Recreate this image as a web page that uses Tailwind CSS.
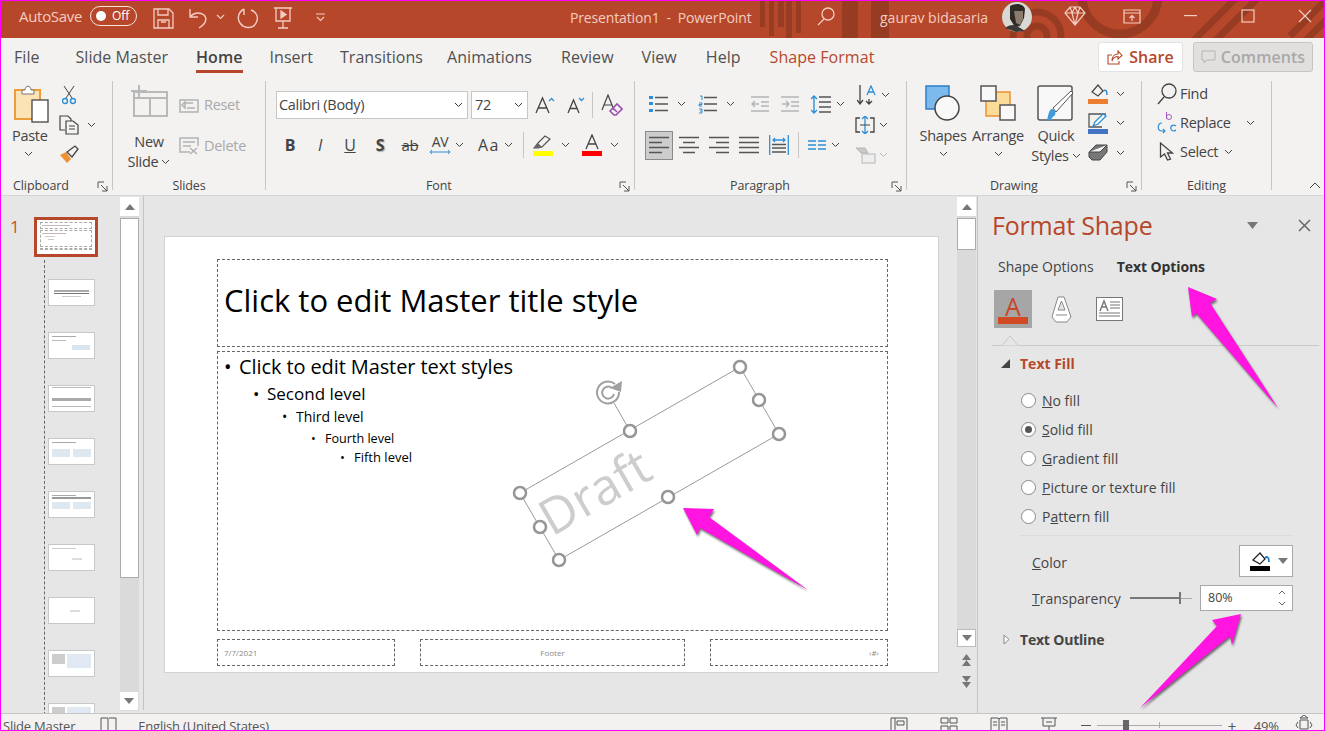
<!DOCTYPE html>
<html><head><meta charset="utf-8">
<script src="https://cdn.jsdelivr.net/npm/@tailwindcss/browser@4"></script>
</head>
<body class="bg-[#e6e6e6]">
<div class="relative w-[1325px] h-[731px] overflow-hidden flex flex-col font-['Open_Sans',sans-serif] text-[#444] bg-[#e6e6e6]">

<!-- Title bar -->
<div class="relative h-[38px] shrink-0 bg-[#b7472a] text-[#f3cdc2] flex items-center overflow-hidden">
  <svg class="absolute left-0 top-0" width="1325" height="38" fill="#000" opacity="0.16">
    <rect x="760" y="0" width="5" height="27"/><rect x="769" y="0" width="5" height="36"/><rect x="778" y="0" width="6" height="27"/><rect x="786" y="0" width="6" height="38"/><rect x="796" y="0" width="5" height="33"/><rect x="842" y="0" width="16" height="38"/><rect x="871" y="0" width="18" height="38"/>
    <g fill="none" stroke="#000"><circle cx="1037" cy="36" r="10" stroke-width="7"/><circle cx="1037" cy="36" r="24" stroke-width="7"/><circle cx="1120" cy="-4" r="38" stroke-width="9"/><path d="M1190 44l50-50M1212 44l50-50M1290 36l34-34M1300 46l34-34" stroke-width="7"/></g>
  </svg>
  <span class="relative -mt-[6px] ml-[19px] w-[62px] text-[15px] whitespace-nowrap tracking-[-0.3px]">AutoSave</span>
  <span class="relative -mt-[6px] ml-[9px] w-[47px] h-[20px] rounded-full border border-[#f7e3dd] flex items-center text-white text-[12px] pl-[5px] gap-[6px]"><span class="w-[10px] h-[10px] rounded-full bg-white"></span>Off</span>
  <svg class="relative -mt-[2px] ml-[16px]" width="21" height="21" viewBox="0 0 21 21" fill="none" stroke="#f3cdc2" stroke-width="1.3"><path d="M1 1h15l4 4v15H1zM5 1v6h10V1M5 20v-8h11v8M8 14h5"/></svg>
  <svg class="relative -mt-[2px] ml-[14px]" width="20" height="22" viewBox="0 0 20 22" fill="none" stroke="#f3cdc2" stroke-width="1.4"><path d="M2 2v8h8M2 10c4-5 10-5 14-2 3 3 3 8-5 13"/></svg>
  <svg class="relative -mt-[4px] ml-[8px]" width="9" height="6" viewBox="0 0 9 6" fill="none" stroke="#f3cdc2" stroke-width="1.2"><path d="M1 1l3.500 3.500L8 1"/></svg>
  <svg class="relative -mt-[2px] ml-[12px]" width="21" height="21" viewBox="0 0 21 21" fill="none" stroke="#f3cdc2" stroke-width="1.4"><path d="M7 1C1 4 0 11 3 15c4 6 13 6 16 0 3-5 1-11-5-13M7 1v6"/></svg>
  <svg class="relative -mt-[2px] ml-[15px]" width="20" height="22" viewBox="0 0 20 22" fill="none" stroke="#f3cdc2" stroke-width="1.3"><path d="M1 1h18M3 1v13h14V1M10 14v7M5 21h10"/><path d="M8 4l5 3.500-5 3.500z" fill="#f3cdc2"/></svg>
  <svg class="relative -mt-[4px] ml-[22px]" width="11" height="9" viewBox="0 0 11 9" fill="none" stroke="#f3cdc2" stroke-width="1.1"><path d="M1 1h9M2 4l3.500 3.500L9 4"/></svg>
  <span class="relative -mt-[4px] ml-[244px] w-[186px] text-[14px] whitespace-nowrap tracking-[-0.15px]">Presentation1&nbsp; -&nbsp; PowerPoint</span>
  <svg class="relative -mt-[6px] ml-[60px]" width="20" height="20" viewBox="0 0 20 20" fill="none" stroke="#f3cdc2" stroke-width="1.3"><circle cx="12" cy="8" r="6"/><path d="M8 13l-6 6"/></svg>
  <span class="relative -mt-[4px] ml-[44px] w-[110px] text-[14px] whitespace-nowrap">gaurav bidasaria</span>
  <svg class="relative ml-[12px] -mt-[5px]" width="30" height="30" viewBox="0 0 30 30"><circle cx="15" cy="15" r="15" fill="#d8d8d4"/><path d="M8 4c5-3 13-3 15 3l-1 9-4 8-5 1-5-8z" fill="#2e2a26"/><path d="M12 9l9 0 0 8-3 6-4-2z" fill="#8b7c6e"/><path d="M3 26c4-3 8-4 12-2l8 5-9 1z" fill="#3b3835"/></svg>
  <svg class="relative -mt-[6px] ml-[32px]" width="22" height="20" viewBox="0 0 22 20" fill="none" stroke="#f3cdc2" stroke-width="1.2"><path d="M6 1h10l5 6-10 12L1 7zM1 7h20M8 7l3 12 3-12M6 1l2 6 3-6 3 6 2-6"/></svg>
  <svg class="relative -mt-[6px] ml-[37px]" width="18" height="15" viewBox="0 0 18 15" fill="none" stroke="#f3cdc2" stroke-width="1.2"><path d="M1 1h16v13H1zM1 4h16M9 12V7M6.500 9L9 6.500 11.500 9"/></svg>
  <svg class="relative -mt-[6px] ml-[43px]" width="14" height="2"><rect width="13" height="1.200" fill="#f3cdc2"/></svg>
  <svg class="relative -mt-[6px] ml-[43px]" width="14" height="14" fill="none" stroke="#f3cdc2" stroke-width="1.2"><rect x="1" y="1" width="12" height="12"/></svg>
  <svg class="relative -mt-[6px] ml-[43px]" width="14" height="14" fill="none" stroke="#f3cdc2" stroke-width="1.2"><path d="M1 1l12 12M13 1L1 13"/></svg>
</div>

<!-- Tabs -->
<div class="h-[38px] shrink-0 bg-[#f3f2f1] flex items-start text-[16px] text-[#505050] tracking-[0.05px] whitespace-nowrap">
  <span class="ml-[14px] mt-[7px]">File</span>
  <span class="ml-[36px] mt-[7px]">Slide Master</span>
  <span class="ml-[28px] mt-[7px] relative font-semibold text-[#444]">Home<span class="absolute left-0 right-0 top-[25px] h-[3px] bg-[#b7472a]"></span></span>
  <span class="ml-[27px] mt-[7px]">Insert</span>
  <span class="ml-[27px] mt-[7px]">Transitions</span>
  <span class="ml-[24px] mt-[7px]">Animations</span>
  <span class="ml-[29px] mt-[7px]">Review</span>
  <span class="ml-[28px] mt-[7px]">View</span>
  <span class="ml-[29px] mt-[7px]">Help</span>
  <span class="ml-[29px] mt-[7px] text-[#b7472a]">Shape Format</span>
  <span class="ml-auto mt-[4px] w-[85px] h-[30px] bg-white rounded-[3px] border border-[#e3e2e0] flex items-center justify-center gap-[6px] font-semibold text-[#b7472a]">
    <svg width="16" height="15" viewBox="0 0 16 15" fill="none" stroke="#b7472a" stroke-width="1.100"><path d="M5 5H1v9h11v-3M5 11c0-5 3-7 6-7V1l4 4.500L11 9V6.500c-3 0-5 1.500-6 4.500z"/></svg>Share
  </span>
  <span class="ml-[10px] mr-[12px] mt-[4px] w-[120px] h-[30px] bg-[#e1e0df] rounded-[3px] border border-[#c8c6c4] flex items-center justify-center gap-[5px] font-semibold text-[#a9a8a7]">
    <svg width="15" height="14" viewBox="0 0 15 14" fill="none" stroke="#b4b3b2"><path d="M1 1h13v9H6l-3 3v-3H1z"/></svg>Comments
  </span>
</div>

<!-- Ribbon -->
<div class="h-[120px] shrink-0 bg-[#f3f2f1] border-b border-[#d6d6d6] flex pt-[5px] text-[14.5px] leading-[20px] whitespace-nowrap tracking-[-0.3px]">

  <!-- Clipboard -->
  <div class="w-[113px] h-[109px] border-r border-[#c8c6c4] flex flex-col">
    <div class="h-[96px] shrink-0 flex pl-[14px]">
      <div class="w-[36px] flex flex-col items-start pt-[4px]">
        <svg width="36" height="38" viewBox="0 0 36 38"><rect x="1" y="5" width="25" height="29" fill="#fbe3b5" stroke="#ed9d3a" stroke-width="2"/><path d="M8 5h3c0-5 6-5 6 0h3v4H8z" fill="#fff" stroke="#777"/><rect x="18" y="15" width="16" height="22" fill="#fff" stroke="#444" stroke-width="1.300"/></svg>
        <span class="mt-[3px] -ml-[2px]">Paste</span>
        <svg class="mt-[5px] ml-[10px]" width="9" height="6" viewBox="0 0 9 6" fill="none" stroke="#444"><path d="M1 1l3.500 3.500L8 1"/></svg>
      </div>
      <div class="ml-[9px] pt-[4px] flex flex-col">
        <svg class="ml-[3px]" width="14" height="20" viewBox="0 0 14 20" fill="none" stroke="#444"><path d="M2 1l8 12M12 1L4 13"/><circle cx="3" cy="16" r="2.500" stroke="#2e8fd6" stroke-width="1.400"/><circle cx="11" cy="16" r="2.500" stroke="#2e8fd6" stroke-width="1.400"/></svg>
        <div class="mt-[10px] flex items-center">
          <svg width="20" height="20" viewBox="0 0 20 20" fill="none" stroke="#444" stroke-width="1.200"><path d="M6 15H1V1h8l3 3v2M7 6h7l5 4v9H7zM10 11h6M10 14h6"/></svg>
          <svg class="ml-[8px]" width="9" height="6" viewBox="0 0 9 6" fill="none" stroke="#444"><path d="M1 1l3.500 3.500L8 1"/></svg>
        </div>
        <svg class="mt-[10px]" width="20" height="19" viewBox="0 0 20 19"><path d="M1 10l6-3 5 7-4 4z" fill="#ee9134"/><path d="M8 7l8-6 3 3-6 8z" fill="none" stroke="#444" stroke-width="1.300"/></svg>
      </div>
    </div>
    <div class="h-[18px] shrink-0 flex items-center justify-between pl-[13px] pr-[4px] text-[12.5px] tracking-[-0.1px]"><span>Clipboard</span>
      <svg width="11" height="11" viewBox="0 0 11 11" fill="none" stroke="#555"><path d="M1 7V1h6M4 4l6 6M10 5v5H5"/></svg></div>
  </div>

  <!-- Slides -->
  <div class="w-[153px] h-[109px] border-r border-[#c8c6c4] flex flex-col">
    <div class="h-[96px] shrink-0 flex">
      <div class="ml-[6px] w-[60px] flex flex-col items-center pt-[3px]">
        <svg width="38" height="33" viewBox="0 0 38 33" fill="none" stroke="#b9b9b9" stroke-width="2"><path d="M4 8h33v24H4zM4 14h33M20 14v18M9 1v14M1 7h16"/></svg>
        <span class="mt-[15px]">New</span>
        <span class="flex items-center gap-[3px]">Slide<svg width="9" height="6" viewBox="0 0 9 6" fill="none" stroke="#444"><path d="M1 1l3.500 3.500L8 1"/></svg></span>
      </div>
      <div class="flex flex-col">
        <div class="mt-[16px] h-[16px] flex items-center text-[#aaa]"><svg width="20" height="16" viewBox="0 0 20 16" fill="none" stroke="#b2b2b2" stroke-width="1.500"><path d="M1 3h18v12H1zM5 6h9M8 11h8M3 8l3-3v6z"/></svg><span class="ml-[5px]">Reset</span></div>
        <div class="mt-[24px] h-[18px] flex items-center text-[#aaa]"><svg width="20" height="18" viewBox="0 0 20 18" fill="none" stroke="#b2b2b2" stroke-width="1.500"><path d="M19 9V1H1v14h10M4 5h12M4 9h8M11 11l7 6M18 11l-7 6"/></svg><span class="ml-[5px]">Delete</span></div>
      </div>
    </div>
    <div class="h-[18px] shrink-0 flex items-center justify-center text-[12.5px] tracking-[-0.1px]">Slides</div>
  </div>

  <!-- Font -->
  <div class="w-[369px] h-[109px] border-r border-[#c8c6c4] flex flex-col">
    <div class="h-[96px] shrink-0 flex flex-col">
      <div class="mt-[10px] h-[28px] pl-[10px] flex items-center">
        <div class="w-[192px] h-[28px] bg-white border border-[#c8c6c4] flex items-center justify-between pl-[2px] pr-[4px]"><span>Calibri (Body)</span><svg width="9" height="6" viewBox="0 0 9 6" fill="none" stroke="#333"><path d="M1 1l3.500 3.500L8 1"/></svg></div>
        <div class="ml-[3px] w-[57px] h-[28px] bg-white border border-[#c8c6c4] flex items-center justify-between pl-[3px] pr-[4px]"><span>72</span><svg width="9" height="6" viewBox="0 0 9 6" fill="none" stroke="#333"><path d="M1 1l3.500 3.500L8 1"/></svg></div>
        <svg class="ml-[7px]" width="20" height="20" viewBox="0 0 20 20" fill="none" stroke="#444" stroke-width="1.300"><path d="M1 18L7.500 3 14 18M3.500 13h8"/><path d="M14 6l2.500-2.500L19 6" stroke="#2e8fd6"/></svg>
        <svg class="ml-[12px]" width="18" height="20" viewBox="0 0 18 20" fill="none" stroke="#444" stroke-width="1.300"><path d="M1 18L6.500 5 12 18M3 13.500h7"/><path d="M12 3l2.500 2.500L17 3" stroke="#2e8fd6"/></svg>
        <span class="ml-[7px] w-[1px] h-[26px] bg-[#c8c6c4]"></span>
        <svg class="ml-[8px]" width="22" height="22" viewBox="0 0 22 22" fill="none" stroke="#444" stroke-width="1.200"><path d="M1 16L7 1l6 15M3 11h8"/><path d="M9 17l7-7 5 5-6 6h-2zM12 14l4 4" stroke="#9b4fb0" stroke-width="1.600"/></svg>
      </div>
      <div class="mt-[14px] h-[24px] pl-[9px] flex items-center">
        <span class="w-[30px] text-center font-bold text-[16px]">B</span>
        <span class="w-[30px] text-center italic text-[16px]">I</span>
        <span class="w-[30px] text-center underline text-[16px]">U</span>
        <span class="w-[30px] text-center font-bold text-[16px] [text-shadow:1px_1px_1px_#aaa]">S</span>
        <span class="w-[30px] text-center line-through text-[15px]">ab</span>
        <span class="ml-[3px] w-[24px] flex flex-col items-center text-[14px] leading-[14px]">AV<svg width="22" height="6" viewBox="0 0 22 6" fill="none" stroke="#2e8fd6"><path d="M1 3h20M3 1L1 3l2 2M19 1l2 2-2 2"/></svg></span>
        <svg class="ml-[3px]" width="9" height="6" viewBox="0 0 9 6" fill="none" stroke="#444"><path d="M1 1l3.500 3.500L8 1"/></svg>
        <span class="ml-[14px] w-[24px] text-[16px] tracking-[1.500px]">Aa</span>
        <svg class="ml-[2px]" width="9" height="6" viewBox="0 0 9 6" fill="none" stroke="#444"><path d="M1 1l3.500 3.500L8 1"/></svg>
        <span class="ml-[10px] w-[1px] h-[26px] bg-[#c8c6c4]"></span>
        <svg class="ml-[9px]" width="20" height="22" viewBox="0 0 20 22"><path d="M1 14l4-5 7-7 5 3-8 8-4 1z" fill="none" stroke="#555" stroke-width="1.200"/><path d="M1 14l4-5 4 4-4 1z" fill="#666"/><rect y="17" width="20" height="5" fill="#ffff00"/></svg>
        <svg class="ml-[8px]" width="9" height="6" viewBox="0 0 9 6" fill="none" stroke="#444"><path d="M1 1l3.500 3.500L8 1"/></svg>
        <svg class="ml-[12px]" width="20" height="22" viewBox="0 0 20 22"><path d="M4 15L10 1l6 14M6 10h8" fill="none" stroke="#444" stroke-width="1.300"/><rect y="17" width="20" height="5" fill="#ff0000"/></svg>
        <svg class="ml-[8px]" width="9" height="6" viewBox="0 0 9 6" fill="none" stroke="#444"><path d="M1 1l3.500 3.500L8 1"/></svg>
      </div>
    </div>
    <div class="h-[18px] shrink-0 flex items-center pr-[4px] text-[12.5px] tracking-[-0.1px]"><span class="ml-[160px]">Font</span>
      <svg class="ml-auto" width="11" height="11" viewBox="0 0 11 11" fill="none" stroke="#555"><path d="M1 7V1h6M4 4l6 6M10 5v5H5"/></svg></div>
  </div>

  <!-- Paragraph -->
  <div class="w-[272px] h-[109px] border-r border-[#c8c6c4] flex flex-col">
    <div class="h-[96px] shrink-0 flex">
      <div class="w-[220px] flex flex-col">
        <div class="mt-[13px] h-[20px] pl-[14px] flex items-center">
          <svg width="19" height="18" viewBox="0 0 19 18"><path d="M0 1h4v3H0zM0 7h4v3H0zM0 14h4v3H0z" fill="#2e8fd6"/><path d="M6 2.500h13M6 9h13M6 15.500h13" stroke="#555" stroke-width="1.500"/></svg>
          <svg class="ml-[9px]" width="9" height="6" viewBox="0 0 9 6" fill="none" stroke="#444"><path d="M1 1l3.500 3.500L8 1"/></svg>
          <svg class="ml-[12px]" width="19" height="19" viewBox="0 0 19 19"><path d="M2 1h2v4M1 8h3v1.500H1V11h3M1 14h3v4H1M2 16h2" fill="none" stroke="#2e8fd6"/><path d="M6 2.500h13M6 9h13M6 15.500h13" stroke="#555" stroke-width="1.500"/></svg>
          <svg class="ml-[9px]" width="9" height="6" viewBox="0 0 9 6" fill="none" stroke="#444"><path d="M1 1l3.500 3.500L8 1"/></svg>
          <svg class="ml-[16px]" width="18" height="16" viewBox="0 0 18 16" fill="none" stroke="#b5b5b5" stroke-width="1.500"><path d="M0 1h18M10 6h8M10 10h8M0 15h18M8 8H1M4 5L1 8l3 3"/></svg>
          <svg class="ml-[12px]" width="18" height="16" viewBox="0 0 18 16" fill="none" stroke="#b5b5b5" stroke-width="1.500"><path d="M0 1h18M10 6h8M10 10h8M0 15h18M1 8h7M5 5l3 3-3 3"/></svg>
          <svg class="ml-[12px]" width="20" height="19" viewBox="0 0 20 19" fill="none"><path d="M3 1v17M0 4l3-3 3 3M0 15l3 3 3-3" stroke="#2e8fd6" stroke-width="1.400"/><path d="M8 2h12M8 7h12M8 12h12M8 17h12" stroke="#555" stroke-width="1.500"/></svg>
          <svg class="ml-[5px]" width="9" height="6" viewBox="0 0 9 6" fill="none" stroke="#444"><path d="M1 1l3.500 3.500L8 1"/></svg>
        </div>
        <div class="mt-[17px] h-[28px] pl-[10px] flex items-center">
          <div class="w-[28px] h-[29px] bg-[#cdcdcd] border border-[#8a8a8a] flex items-center justify-center"><svg width="20" height="18" viewBox="0 0 20 18" stroke="#555" stroke-width="1.500"><path d="M0 1.500h20M0 6.500h13M0 11.500h20M0 16.500h13"/></svg></div>
          <svg class="ml-[6px]" width="20" height="18" viewBox="0 0 20 18" stroke="#555" stroke-width="1.500"><path d="M0 1.500h20M4 6.500h12M0 11.500h20M4 16.500h12"/></svg>
          <svg class="ml-[10px]" width="20" height="18" viewBox="0 0 20 18" stroke="#555" stroke-width="1.500"><path d="M0 1.500h20M7 6.500h13M0 11.500h20M7 16.500h13"/></svg>
          <svg class="ml-[10px]" width="20" height="18" viewBox="0 0 20 18" stroke="#555" stroke-width="1.500"><path d="M0 1.500h20M0 6.500h20M0 11.500h20M0 16.500h20"/></svg>
          <svg class="ml-[10px]" width="20" height="20" viewBox="0 0 20 20" fill="none"><path d="M.7 0v20M19.300 0v20M4 5h12M6 3L4 5l2 2M14 3l2 2-2 2" stroke="#2e8fd6" stroke-width="1.300"/><path d="M3 9.500h14M3 13h14M3 17h14" stroke="#555" stroke-width="1.500"/></svg>
          <span class="ml-[9px] w-[1px] h-[26px] bg-[#c8c6c4]"></span>
          <svg class="ml-[9px]" width="18" height="10" viewBox="0 0 18 10" stroke="#2e8fd6" stroke-width="1.500"><path d="M0 1h8M0 5h8M0 9h8M10 1h8M10 5h8M10 9h8"/></svg>
          <svg class="ml-[5px]" width="9" height="6" viewBox="0 0 9 6" fill="none" stroke="#444"><path d="M1 1l3.500 3.500L8 1"/></svg>
        </div>
      </div>
      <div class="flex flex-col pt-[4px]">
        <div class="h-[20px] flex items-center">
          <svg class="ml-[2px]" width="23" height="20" viewBox="0 0 23 20" fill="none"><path d="M3 0v19M0 15l3 4 3-4" stroke="#444" stroke-width="1.300"/><path d="M12 14v5M9 16l3 3 3-3" stroke="#444" stroke-width="1.300"/><path d="M10 10l4-9 4 9M11.500 7h5" stroke="#2e8fd6" stroke-width="1.300"/></svg>
          <svg class="ml-[1px]" width="9" height="6" viewBox="0 0 9 6" fill="none" stroke="#444"><path d="M1 1l3.500 3.500L8 1"/></svg>
        </div>
        <div class="mt-[10px] h-[20px] flex items-center">
          <svg width="20" height="18" viewBox="0 0 20 18" fill="none"><path d="M5 2H1v14h4M15 2h4v14h-4" stroke="#444" stroke-width="1.300"/><path d="M10 0v18M7 3l3-3 3 3M7 15l3 3 3-3" stroke="#2e8fd6" stroke-width="1.300"/><path d="M5 9h10" stroke="#444"/></svg>
          <svg class="ml-[4px]" width="9" height="6" viewBox="0 0 9 6" fill="none" stroke="#444"><path d="M1 1l3.500 3.500L8 1"/></svg>
        </div>
        <div class="mt-[10px] h-[20px] flex items-center">
          <svg width="21" height="17" viewBox="0 0 21 17" fill="#c9c9c9" stroke="#b5b5b5"><path d="M1 1h9l3 5H6z"/><rect x="7" y="7" width="13" height="9" fill="#eee"/></svg>
          <svg class="ml-[3px]" width="9" height="6" viewBox="0 0 9 6" fill="none" stroke="#bbb"><path d="M1 1l3.500 3.500L8 1"/></svg>
        </div>
      </div>
    </div>
    <div class="h-[18px] shrink-0 flex items-center pr-[4px] text-[12.5px] tracking-[-0.1px]"><span class="ml-[95px]">Paragraph</span>
      <svg class="ml-auto" width="11" height="11" viewBox="0 0 11 11" fill="none" stroke="#555"><path d="M1 7V1h6M4 4l6 6M10 5v5H5"/></svg></div>
  </div>

  <!-- Drawing -->
  <div class="w-[235px] h-[109px] border-r border-[#c8c6c4] flex flex-col">
    <div class="h-[96px] shrink-0 flex">
      <div class="ml-[8px] w-[56px] flex flex-col items-center pt-[4px]">
        <svg width="36" height="36" viewBox="0 0 36 36"><rect x="1" y="1" width="23" height="23" fill="#7cb9ec" stroke="#2e7fc9" stroke-width="1.500"/><circle cx="22" cy="23" r="12" fill="#f8f8f8" stroke="#444" stroke-width="1.500"/></svg>
        <span class="mt-[5px]">Shapes</span>
        <svg class="mt-[5px]" width="9" height="6" viewBox="0 0 9 6" fill="none" stroke="#444"><path d="M1 1l3.500 3.500L8 1"/></svg>
      </div>
      <div class="w-[54px] flex flex-col items-center pt-[4px]">
        <svg width="36" height="36" viewBox="0 0 36 36"><rect x="6" y="7" width="24" height="24" fill="#fbdb98" stroke="#ed9134" stroke-width="1.500"/><rect x="1" y="1" width="15" height="15" fill="#f8f8f8" stroke="#555" stroke-width="1.500"/><rect x="20" y="20" width="15" height="15" fill="#f8f8f8" stroke="#555" stroke-width="1.500"/></svg>
        <span class="mt-[5px]">Arrange</span>
        <svg class="mt-[5px]" width="9" height="6" viewBox="0 0 9 6" fill="none" stroke="#444"><path d="M1 1l3.500 3.500L8 1"/></svg>
      </div>
      <div class="ml-[4px] w-[54px] flex flex-col items-center pt-[4px]">
        <svg width="38" height="38" viewBox="0 0 38 38"><rect x="1" y="1" width="34" height="34" rx="2" fill="#f8f8f8" stroke="#555" stroke-width="1.500"/><path d="M19 27l17-19-2-2-18 17z" fill="#fff" stroke="#555"/><path d="M10 36c4 0 5-4 7-5 3-2 1-7-2-7s-4 7-5 12z" fill="#3f9bdc"/></svg>
        <span class="mt-[3px]">Quick</span>
        <span class="flex items-center gap-[3px]">Styles<svg width="9" height="6" viewBox="0 0 9 6" fill="none" stroke="#444"><path d="M1 1l3.500 3.500L8 1"/></svg></span>
      </div>
      <div class="ml-[5px] pt-[3px] flex flex-col">
        <div class="h-[20px] flex items-center"><svg width="20" height="20" viewBox="0 0 20 20"><path d="M4 8l6-7 5 6-5 5z" fill="none" stroke="#444" stroke-width="1.200"/><path d="M15 7c3-2 4 0 4 4" fill="none" stroke="#2e8fd6" stroke-width="1.500"/><rect y="15" width="20" height="5" fill="#ed7d31"/></svg><svg class="ml-[8px]" width="9" height="6" viewBox="0 0 9 6" fill="none" stroke="#444"><path d="M1 1l3.500 3.500L8 1"/></svg></div>
        <div class="mt-[9px] h-[20px] flex items-center"><svg width="20" height="21" viewBox="0 0 20 21"><path d="M18 1H1v13h13" fill="none" stroke="#555" stroke-width="1.300"/><path d="M5 13l2-4 8-8 3 2-8 8z" fill="#fff" stroke="#2e8fd6" stroke-width="1.300"/><rect y="16" width="20" height="5" fill="#4472c4"/></svg><svg class="ml-[8px]" width="9" height="6" viewBox="0 0 9 6" fill="none" stroke="#444"><path d="M1 1l3.500 3.500L8 1"/></svg></div>
        <div class="mt-[10px] h-[20px] flex items-center"><svg width="20" height="18" viewBox="0 0 20 18"><path d="M1 8l7-7h11v7l-7 8H4l-3-3z" fill="#777" stroke="#444"/><path d="M1 8h11l7-7" fill="#f3f3f3" stroke="#444"/></svg><svg class="ml-[8px]" width="9" height="6" viewBox="0 0 9 6" fill="none" stroke="#444"><path d="M1 1l3.500 3.500L8 1"/></svg></div>
      </div>
    </div>
    <div class="h-[18px] shrink-0 flex items-center pr-[4px] text-[12.5px] tracking-[-0.1px]"><span class="ml-[83px]">Drawing</span>
      <svg class="ml-auto" width="11" height="11" viewBox="0 0 11 11" fill="none" stroke="#555"><path d="M1 7V1h6M4 4l6 6M10 5v5H5"/></svg></div>
  </div>

  <!-- Editing -->
  <div class="w-[130px] h-[109px] border-r border-[#c8c6c4] flex flex-col">
    <div class="h-[96px] shrink-0 flex flex-col pl-[15px]">
      <div class="mt-[1px] h-[24px] flex items-center"><svg width="20" height="22" viewBox="0 0 20 22" fill="none" stroke="#444" stroke-width="1.300"><circle cx="12" cy="8" r="7"/><path d="M7 14l-6 7"/></svg><span class="ml-[3px]">Find</span></div>
      <div class="mt-[5px] h-[24px] flex items-center"><svg width="20" height="24" viewBox="0 0 20 24" fill="none"><path d="M5 12c-5 0-5 8 0 8h3M6 18l2 2-2 2" stroke="#2e8fd6" stroke-width="1.200"/><circle cx="12" cy="6" r="2.500" stroke="#a85cc0"/><path d="M9.500 1v7" stroke="#a85cc0"/><path d="M19 15c-3-2-6 0-5 3s4 2 5 1" stroke="#2e8fd6" stroke-width="1.200"/></svg><span class="ml-[3px]">Replace</span><svg class="ml-[15px]" width="9" height="6" viewBox="0 0 9 6" fill="none" stroke="#444"><path d="M1 1l3.500 3.500L8 1"/></svg></div>
      <div class="mt-[5px] h-[24px] flex items-center"><svg class="ml-[1px]" width="19" height="20" viewBox="0 0 16 20" fill="none" stroke="#444" stroke-width="1.300"><path d="M1 1v14l4-3 3 6 3-1-3-6h5z"/></svg><span class="ml-[3px]">Select</span><svg class="ml-[6px]" width="9" height="6" viewBox="0 0 9 6" fill="none" stroke="#444"><path d="M1 1l3.500 3.500L8 1"/></svg></div>
    </div>
    <div class="h-[18px] shrink-0 text-[12.5px] tracking-[-0.1px] flex items-center justify-center">Editing</div>
  </div>

  <svg class="ml-auto mr-[4px] self-end mb-[6px]" width="12" height="7" viewBox="0 0 12 7" fill="none" stroke="#444"><path d="M1 6l5-5 5 5"/></svg>
</div>

<!-- Main -->
<div class="h-[517px] shrink-0 flex bg-[#e6e6e6]">
  <!-- thumbs -->
  <div class="relative w-[120px] h-full overflow-hidden">
    <span class="absolute left-[44px] top-[64px] h-[460px] border-l border-dashed border-[#666]"></span>
    <div class="flex pt-[21px]">
      <span class="ml-[10px] w-[24px] text-[17px] leading-[20px] text-[#c8502f]">1</span>
      <div class="w-[64px] h-[40px] border-[3px] border-[#b7472a] bg-white px-[3px] py-[2px] flex flex-col gap-[1px]">
        <div class="h-[7px] border border-dashed border-[#aaa] px-[1px] pt-[2px]"><div class="w-[28px] h-[1px] bg-[#c9b5b5]"></div></div>
        <div class="h-[17px] border border-dashed border-[#aaa] px-[1px] pt-[2px]"><div class="w-[24px] h-[1px] bg-[#c9b5b5]"></div><div class="mt-[2px] ml-[3px] w-[10px] h-[1px] bg-[#ccc]"></div><div class="mt-[2px] ml-[6px] w-[6px] h-[1px] bg-[#ccc]"></div></div>
        <div class="h-[2px] border-y border-dashed border-[#aaa]"></div>
      </div>
    </div>
    <div class="ml-[48px] mt-[22px] flex flex-col gap-[26px]">
      <div class="w-[47px] h-[27px] bg-white border border-[#c8c8c8] px-[5px] pt-[10px]"><div class="h-[2px] bg-[#aaa]"></div><div class="mt-[1px] h-[1px] bg-[#777]"></div><div class="mt-[2px] mx-[8px] h-[1px] bg-[#ccc]"></div></div>
      <div class="w-[47px] h-[27px] bg-white border border-[#c8c8c8] px-[3px] pt-[3px]"><div class="w-[24px] h-[1px] bg-[#aaa]"></div><div class="mt-[3px] w-[14px] h-[1px] bg-[#bbb]"></div><div class="mt-[4px] ml-[20px] w-[18px] h-[5px] bg-[#d9e6f0]"></div></div>
      <div class="w-[47px] h-[27px] bg-white border border-[#c8c8c8] px-[3px] pt-[1px]"><div class="h-[1px] bg-[#bbb]"></div><div class="mt-[10px] h-[3px] bg-[#aaa]"></div><div class="mt-[5px] h-[1px] bg-[#bbb]"></div></div>
      <div class="w-[47px] h-[27px] bg-white border border-[#c8c8c8] px-[3px] pt-[3px]"><div class="w-[24px] h-[1px] bg-[#aaa]"></div><div class="mt-[6px] flex gap-[3px]"><div class="w-[18px] h-[8px] bg-[#dde8f0]"></div><div class="w-[18px] h-[8px] bg-[#dde8f0]"></div></div></div>
      <div class="w-[47px] h-[27px] bg-white border border-[#c8c8c8] px-[3px] pt-[3px]"><div class="w-[24px] h-[1px] bg-[#aaa]"></div><div class="mt-[1px] h-[2px] bg-[#999]"></div><div class="mt-[3px] flex gap-[3px]"><div class="w-[18px] h-[7px] bg-[#dde8f0]"></div><div class="w-[18px] h-[7px] bg-[#dde8f0]"></div></div></div>
      <div class="w-[47px] h-[27px] bg-white border border-[#c8c8c8] px-[3px] pt-[3px]"><div class="w-[24px] h-[1px] bg-[#ccc]"></div><div class="mt-[9px] ml-[20px] w-[10px] h-[2px] bg-[#ddd]"></div></div>
      <div class="w-[47px] h-[27px] bg-white border border-[#c8c8c8] px-[3px] pt-[12px]"><div class="ml-[18px] w-[10px] h-[2px] bg-[#ddd]"></div></div>
      <div class="w-[47px] h-[27px] bg-white border border-[#c8c8c8] px-[3px] pt-[3px] flex gap-[2px]"><div class="w-[13px] h-[10px] bg-[#ccc]"></div><div class="w-[24px] h-[14px] bg-[#e0e9f1]"></div></div>
      <div class="w-[47px] h-[27px] bg-white border border-[#c8c8c8] px-[3px] pt-[3px] flex gap-[2px]"><div class="w-[13px] h-[10px] bg-[#ccc]"></div><div class="w-[24px] h-[14px] bg-[#e0e9f1]"></div></div>
    </div>
  </div>
  <!-- scrollbar 1 -->
  <div class="w-[19px] h-[514px] mt-[1px] bg-[#dadada] flex flex-col">
    <div class="h-[19px] bg-white flex items-center justify-center"><svg width="10" height="6"><path d="M0 6L5 0l5 6z" fill="#777"/></svg></div>
    <div class="mt-[2px] h-[360px] bg-white border border-[#ababab]"></div>
    <div class="mt-auto mb-[1px] mr-[1px] h-[18px] bg-white flex items-center justify-center"><svg width="10" height="6"><path d="M0 0l5 6 5-6z" fill="#777"/></svg></div>
  </div>
  <div class="ml-[4px] w-[1px] h-[514px] bg-[#c3c3c3]"></div>
  <!-- editor -->
  <div class="w-[813px] h-full pl-[20px] pt-[40px]">
    <div class="w-[775px] h-[437px] bg-white border border-[#d2d2d2] pl-[52px] pr-[50px] pt-[22px] text-black flex flex-col">
      <div class="h-[88px] border border-dashed border-[#666] flex items-center pl-[6px] pb-[6px] text-[31px] leading-[40px] whitespace-nowrap">Click to edit Master title style</div>
      <div class="mt-[4px] h-[280px] border border-dashed border-[#666] pl-[6px] pt-[1px] whitespace-nowrap">
        <div class="text-[20px] leading-[28px] flex tracking-[-0.1px]"><span class="w-[15px]">•</span>Click to edit Master text styles</div>
        <div class="mt-[1px] ml-[29px] text-[17px] leading-[24px] flex"><span class="w-[14px]">•</span>Second level</div>
        <div class="mt-[1px] ml-[58px] text-[14px] leading-[20px] flex"><span class="w-[14px]">•</span>Third level</div>
        <div class="mt-[2px] ml-[87px] text-[12.600px] leading-[19px] flex"><span class="w-[14px]">•</span>Fourth level</div>
        <div class="ml-[116px] text-[13px] leading-[19px] flex"><span class="w-[14px]">•</span>Fifth level</div>
      </div>
      <div class="mt-[8px] flex justify-between text-[8px] text-[#8a8a8a]">
        <div class="w-[178px] h-[27px] border border-dashed border-[#666] flex items-center pl-[6px]">7/7/2021</div>
        <div class="w-[265px] h-[27px] border border-dashed border-[#666] flex items-center justify-center">Footer</div>
        <div class="w-[178px] h-[27px] border border-dashed border-[#666] flex items-center justify-end pr-[8px]">‹#›</div>
      </div>
    </div>
  </div>
  <!-- scrollbar 2 -->
  <div class="w-[19px] h-full pt-[1px] flex flex-col">
    <div class="h-[19px] bg-white flex items-center justify-center"><svg width="10" height="6"><path d="M0 6L5 0l5 6z" fill="#777"/></svg></div>
    <div class="h-[413px] bg-[#dadada] pt-[2px]"><div class="h-[32px] bg-white border border-[#ababab]"></div></div>
    <div class="h-[18px] bg-white border border-[#bbb] flex items-center justify-center"><svg width="10" height="6"><path d="M0 0l5 6 5-6z" fill="#777"/></svg></div>
    <svg class="mt-[7px] ml-[5px]" width="9" height="12" viewBox="0 0 9 12" fill="#777"><path d="M0 6l4.500-6L9 6zM0 12l4.500-6L9 12z"/></svg>
    <svg class="mt-[10px] ml-[5px]" width="9" height="12" viewBox="0 0 9 12" fill="#777"><path d="M0 0l4.500 6L9 0zM0 6l4.500 6L9 6z"/></svg>
  </div>
  <!-- pane -->
  <div class="ml-[1px] flex-1 h-full border-l border-[#c4c4c4] text-[14px] whitespace-nowrap flex flex-col">
    <div class="h-[59px] shrink-0 flex items-center pl-[14px] text-[#b7472a] text-[25px] tracking-[-0.2px]"><span>Format Shape</span>
      <svg class="ml-[95px]" width="11" height="7"><path d="M0 0h11L5.500 7z" fill="#777"/></svg>
      <svg class="ml-[40px]" width="13" height="13" fill="none" stroke="#666" stroke-width="1.500"><path d="M1 1l11 11M12 1L1 12"/></svg>
    </div>
    <div class="h-[22px] shrink-0 pl-[20px] flex items-center"><span>Shape Options</span><span class="ml-[23px] font-bold text-[#333] tracking-[-0.1px]">Text Options</span></div>
    <div class="mt-[13px] h-[38px] shrink-0 pl-[16px] flex items-center">
      <div class="w-[38px] h-[38px] bg-[#a6a6a6] flex flex-col items-center justify-end pb-[4px]"><span class="text-[#c8472a] text-[25px] leading-[22px]">A</span><span class="w-[30px] h-[7px] bg-[#d14a24]"></span></div>
      <svg class="ml-[19px]" width="21" height="28" viewBox="0 0 21 28" fill="none" stroke="#888"><path d="M7 2h6l7 20-4 5H5l-4-5zM7 15h7L10.500 6zM5 20h11" fill="#fff"/></svg>
      <svg class="ml-[24px]" width="27" height="24" viewBox="0 0 27 24"><rect x=".5" y=".5" width="26" height="23" fill="#fff" stroke="#777"/><path d="M4 14L8 4l4 10M5.500 10h5" fill="none" stroke="#777" stroke-width="1.400"/><path d="M14 5h10M14 8h10M14 11h10M3 16h21M3 19h21" stroke="#777"/></svg>
    </div>
    <div class="relative mt-[17px] ml-[14px] mr-[6px] h-[1px] shrink-0 bg-[#c8c8c8]"><svg class="absolute left-[10px] -top-[10px]" width="16" height="11" viewBox="0 0 16 11" fill="#e6e6e6" stroke="#c8c8c8"><path d="M0 10.500L8 1l8 9.500"/></svg></div>
    <div class="mt-[7px] h-[20px] shrink-0 flex items-center pl-[23px]"><svg width="9" height="9"><path d="M9 0v9H0z" fill="#444"/></svg><span class="ml-[10px] font-bold text-[#b7472a]">Text Fill</span></div>
    <div class="mt-[17px] pl-[43px] flex flex-col gap-[9px]">
      <label class="h-[20px] flex items-center gap-[6px]"><span class="w-[15px] h-[15px] rounded-full bg-white border border-[#8a8a8a]"></span><span><u>N</u>o fill</span></label>
      <label class="h-[20px] flex items-center gap-[6px]"><span class="w-[15px] h-[15px] rounded-full bg-white border border-[#8a8a8a] flex items-center justify-center"><span class="w-[7px] h-[7px] rounded-full bg-[#555]"></span></span><span><u>S</u>olid fill</span></label>
      <label class="h-[20px] flex items-center gap-[6px]"><span class="w-[15px] h-[15px] rounded-full bg-white border border-[#8a8a8a]"></span><span><u>G</u>radient fill</span></label>
      <label class="h-[20px] flex items-center gap-[6px]"><span class="w-[15px] h-[15px] rounded-full bg-white border border-[#8a8a8a]"></span><span><u>P</u>icture or texture fill</span></label>
      <label class="h-[20px] flex items-center gap-[6px]"><span class="w-[15px] h-[15px] rounded-full bg-white border border-[#8a8a8a]"></span><span>P<u>a</u>ttern fill</span></label>
    </div>
    <div class="mt-[9px] ml-[42px] w-[273px] h-[1px] shrink-0 bg-[#dcdcdc]"></div>
    <div class="mt-[9px] h-[32px] shrink-0 flex items-center pl-[54px]"><span class="w-[207px] mt-[2px]"><u>C</u>olor</span>
      <div class="w-[54px] h-[32px] bg-white border border-[#a8a8a8] flex items-center pl-[10px]">
        <svg width="21" height="20" viewBox="0 0 21 20"><path d="M3 9l7-7 5 6-5 5z" fill="none" stroke="#222" stroke-width="1.200"/><path d="M15 7c2-2 4-1 4 4" fill="none" stroke="#1f7ac4" stroke-width="1.800"/><rect y="15" width="20" height="5" fill="#000"/></svg>
        <svg class="ml-[7px]" width="10" height="6"><path d="M0 0h10L5 6z" fill="#777"/></svg>
      </div>
    </div>
    <div class="mt-[8px] h-[26px] shrink-0 flex items-center pl-[54px]"><span class="w-[98px]"><u>T</u>ransparency</span>
      <div class="relative w-[62px] h-[12px] flex items-center"><span class="w-[49px] h-[2px] bg-[#777]"></span><span class="w-[2px] h-[12px] bg-[#777]"></span><span class="flex-1 h-[1px] bg-[#aaa]"></span></div>
      <div class="ml-[8px] w-[93px] h-[26px] bg-white border border-[#a8a8a8] flex items-center justify-between pl-[7px] pr-[6px] text-[12.500px]"><span>80%</span>
        <svg width="8" height="18" viewBox="0 0 8 18" fill="none" stroke="#666"><path d="M1 5l3-3 3 3M1 13l3 3 3-3"/></svg></div>
    </div>
    <div class="mt-[18px] h-[20px] shrink-0 flex items-center pl-[25px]"><svg width="7" height="11" viewBox="0 0 7 11" fill="#fff" stroke="#888"><path d="M1 1l5 4.500L1 10z"/></svg><span class="ml-[10px] font-bold text-[#444] tracking-[-0.2px]">Text Outline</span></div>
  </div>
</div>

<!-- Status bar -->
<div class="h-[18px] shrink-0 bg-[#f3f2f1] border-t border-[#c6c6c6] overflow-hidden flex items-start text-[13px] leading-[18px] pt-[3px] whitespace-nowrap text-[#555] tracking-[-0.2px]">
  <span class="ml-[3px]">Slide Master</span>
  <svg class="ml-[25px]" width="18" height="14" viewBox="0 0 18 14" fill="none" stroke="#555"><path d="M1 1h7v13M9 1h7v13M1 1v13"/></svg>
  <span class="ml-[20px]">English (United States)</span>
  <svg class="ml-[621px]" width="18" height="14" fill="none" stroke="#555"><path d="M1 1h16v13H1zM5 1v13M7 4h7v4H7z"/></svg>
  <svg class="ml-[32px]" width="18" height="14" fill="none" stroke="#555"><path d="M1 1h7v5H1zM10 1h7v5h-7zM1 9h7v5H1zM10 9h7v5h-7z"/></svg>
  <svg class="ml-[32px]" width="18" height="14" fill="none" stroke="#555"><path d="M1 1h7l1 1 1-1h7v13H1zM9 2v12M3 5h4M3 8h4M11 5h4M11 8h4"/></svg>
  <svg class="ml-[32px]" width="18" height="14" fill="none" stroke="#555"><path d="M1 1h16M3 1v8h12V1M9 9v5M6 5h6"/></svg>
  <span class="ml-[23px] mt-[8px] w-[10px] h-[1px] bg-[#555]"></span>
  <div class="relative ml-[6px] w-[125px] h-[12px] mt-[3px]"><span class="absolute left-0 right-0 top-[5px] h-[1px] bg-[#aaa]"></span><span class="absolute left-[62px] top-[2px] w-[1px] h-[6px] bg-[#aaa]"></span><span class="absolute left-[26px] top-0 w-[6px] h-[14px] bg-[#666]"></span></div>
  <span class="ml-[6px] text-[15px] leading-[14px] mt-[2px] w-[10px]">+</span>
  <span class="ml-[16px] w-[30px]">49%</span>
  <svg class="ml-[11px] -mt-[2px]" width="18" height="16" fill="none" stroke="#555"><path d="M9 0L5 3h8zM5 5h8v9H5zM3 7L1 10l2 3M15 7l2 3-2 3"/></svg>
</div>

<!-- Draft shape on the slide and callout arrows -->
<svg class="absolute left-0 top-0 pointer-events-none" width="1325" height="731" viewBox="0 0 1325 731">
  <text x="0" y="0" transform="translate(552 537) rotate(-30)" font-family="'Open Sans',sans-serif" font-size="50" fill="#cdcdcd">Draft</text>
  <path d="M520 493L740 367L779 434L559 560zM630 431L614 403" fill="none" stroke="#9a9a9a"/>
  <g fill="#fff" stroke="#969696" stroke-width="2.500">
    <circle cx="740" cy="367" r="6"/><circle cx="759" cy="400" r="6"/><circle cx="779" cy="434" r="6"/><circle cx="668" cy="497" r="6"/><circle cx="559" cy="560" r="6"/><circle cx="540" cy="527" r="6"/><circle cx="520" cy="493" r="6"/><circle cx="630" cy="431" r="6"/>
  </g>
  <g fill="none" stroke="#a0a0a0" stroke-width="2"><path d="M619 392a11 11 0 1 1-4-8"/><path d="M614 394a6 6 0 1 1-2-6"/></g>
  <path d="M610 388l12-7-1 11z" fill="#a0a0a0"/>
  <g fill="#ff14e0" class="drop-shadow-[1px_2px_1px_rgba(0,0,0,0.55)]">
    <path d="M683 508L714 509L709 517L808 590L700 528L697 535z"/>
    <path d="M1188 287L1217 299L1210 303L1278 408L1196 313L1192 317z"/>
    <path d="M1241 614L1212 620L1217 626L1140 708L1230 636L1232 645z"/>
  </g>
</svg>

<!-- Window edge -->
<div class="absolute inset-0 border border-[#ff00ff] pointer-events-none"></div>
</div>
</body></html>
